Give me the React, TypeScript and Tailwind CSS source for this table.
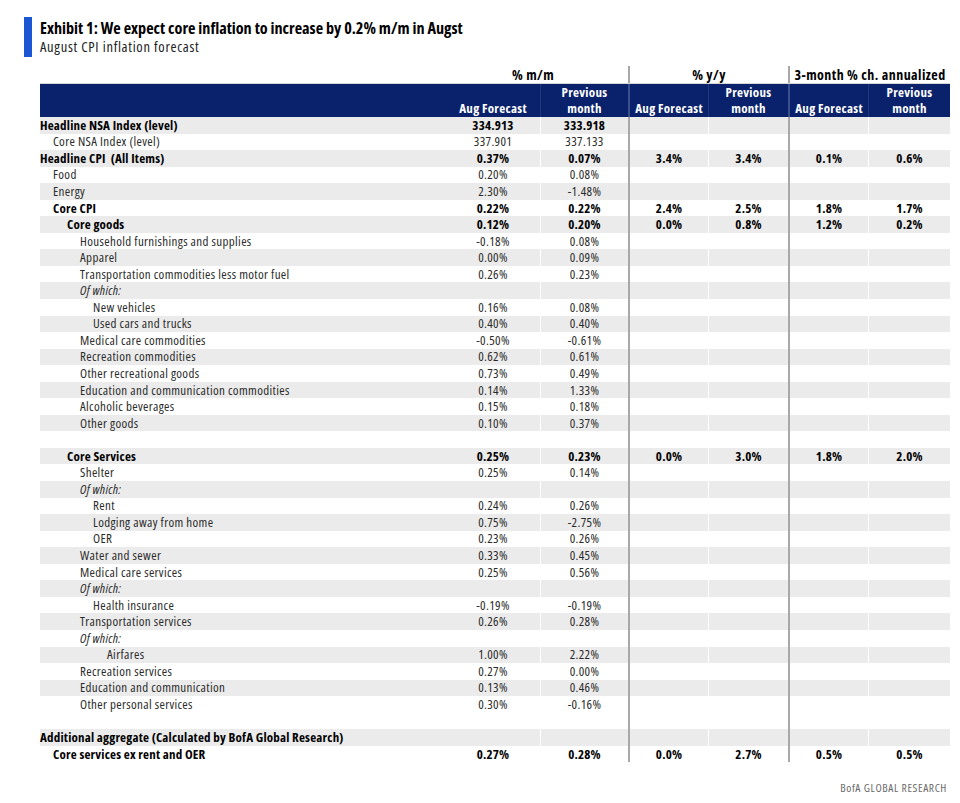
import React from "react";

type Row = {
  label: string;
  indent: number;
  bold?: boolean;
  italic?: boolean;
  vals: string[];
  gray: boolean;
};

const R = (
  label: string,
  indent: number,
  vals: string[],
  gray: boolean,
  opts: { bold?: boolean; italic?: boolean } = {}
): Row => ({ label, indent, vals, gray, ...opts });

const rows: Row[] = [
  R("Headline NSA Index (level)", 0, ["334.913", "333.918"], true, { bold: true }),
  R("Core NSA Index (level)", 1, ["337.901", "337.133"], false),
  R("Headline CPI\u00a0 (All Items)", 0, ["0.37%", "0.07%", "3.4%", "3.4%", "0.1%", "0.6%"], true, { bold: true }),
  R("Food", 1, ["0.20%", "0.08%"], false),
  R("Energy", 1, ["2.30%", "-1.48%"], true),
  R("Core CPI", 1, ["0.22%", "0.22%", "2.4%", "2.5%", "1.8%", "1.7%"], false, { bold: true }),
  R("Core goods", 2, ["0.12%", "0.20%", "0.0%", "0.8%", "1.2%", "0.2%"], true, { bold: true }),
  R("Household furnishings and supplies", 3, ["-0.18%", "0.08%"], false),
  R("Apparel", 3, ["0.00%", "0.09%"], true),
  R("Transportation commodities less motor fuel", 3, ["0.26%", "0.23%"], false),
  R("Of which:", 3, [], true, { italic: true }),
  R("New vehicles", 4, ["0.16%", "0.08%"], false),
  R("Used cars and trucks", 4, ["0.40%", "0.40%"], true),
  R("Medical care commodities", 3, ["-0.50%", "-0.61%"], false),
  R("Recreation commodities", 3, ["0.62%", "0.61%"], true),
  R("Other recreational goods", 3, ["0.73%", "0.49%"], false),
  R("Education and communication commodities", 3, ["0.14%", "1.33%"], true),
  R("Alcoholic beverages", 3, ["0.15%", "0.18%"], false),
  R("Other goods", 3, ["0.10%", "0.37%"], true),
  R("", 0, [], false),
  R("Core Services", 2, ["0.25%", "0.23%", "0.0%", "3.0%", "1.8%", "2.0%"], true, { bold: true }),
  R("Shelter", 3, ["0.25%", "0.14%"], false),
  R("Of which:", 3, [], true, { italic: true }),
  R("Rent", 4, ["0.24%", "0.26%"], false),
  R("Lodging away from home", 4, ["0.75%", "-2.75%"], true),
  R("OER", 4, ["0.23%", "0.26%"], false),
  R("Water and sewer", 3, ["0.33%", "0.45%"], true),
  R("Medical care services", 3, ["0.25%", "0.56%"], false),
  R("Of which:", 3, [], true, { italic: true }),
  R("Health insurance", 4, ["-0.19%", "-0.19%"], false),
  R("Transportation services", 3, ["0.26%", "0.28%"], true),
  R("Of which:", 3, [], false, { italic: true }),
  R("Airfares", 5, ["1.00%", "2.22%"], true),
  R("Recreation services", 3, ["0.27%", "0.00%"], false),
  R("Education and communication", 3, ["0.13%", "0.46%"], true),
  R("Other personal services", 3, ["0.30%", "-0.16%"], false),
  R("", 0, [], false),
  R("Additional aggregate (Calculated by BofA Global Research)", 0, [], true, { bold: true }),
  R("Core services ex rent and OER", 1, ["0.27%", "0.28%", "0.0%", "2.7%", "0.5%", "0.5%"], false, { bold: true }),
];

const indentCls = ["pl-0", "pl-[13px]", "pl-[27px]", "pl-[40px]", "pl-[53px]", "pl-[67px]"];

const GRID = "grid w-[910px] grid-cols-[406px_94px_88px_80px_80px_80px_82px]";

const bodyDiv = [
  "",
  "border-l border-white",
  "border-l-2 border-[#a8a8a8]",
  "border-l border-white",
  "border-l-2 border-[#a8a8a8]",
  "border-l border-white",
];

const headDiv = [
  "",
  "border-l border-white/10",
  "border-l-2 border-[#3b4f8c]",
  "border-l border-white/10",
  "border-l-2 border-[#3b4f8c]",
  "border-l border-white/10",
];

function TableRow({ r }: { r: Row }) {
  const bg = r.gray ? "bg-[#ebebeb]" : "bg-white";
  const weight = r.bold
    ? "font-bold text-black text-[13px] tracking-[0.2px]"
    : "font-normal text-[#2b2b2b] text-[13px] tracking-[0.35px]";
  return (
    <div className={`${GRID} h-[16.55px] ${bg} ${weight}`}>
      <div className={`flex items-center whitespace-nowrap ${indentCls[r.indent]} ${r.italic ? "italic" : ""}`}>
        {r.label}
      </div>
      {[0, 1, 2, 3, 4, 5].map((i) => (
        <div key={i} className={`flex items-center justify-center ${bodyDiv[i]}`}>
          {r.vals[i] ?? ""}
        </div>
      ))}
    </div>
  );
}

export default function App() {
  return (
    <div className="w-[960px] h-[803px] bg-white font-['Open_Sans',sans-serif] [font-stretch:75%] relative">
      {/* Title */}
      <div className="flex pt-[17px] pl-[24px] gap-[8px]">
        <div className="w-[8px] h-[40px] bg-[#1c57d3]" />
        <div className="flex flex-col mt-[2px]">
          <div className="text-[16.2px] leading-[19px] font-bold text-black">
            Exhibit 1: We expect core inflation to increase by 0.2% m/m in Augst
          </div>
          <div className="text-[14.5px] leading-[17px] tracking-[0.7px] text-[#222]">
            August CPI inflation forecast
          </div>
        </div>
      </div>

      {/* Table */}
      <div className="pl-[40px] mt-[9px] leading-none">
        {/* group header row */}
        <div className={`${GRID} h-[17px] font-bold text-black text-[14px] tracking-[0.45px]`}>
          <div />
          <div className="col-span-2 flex items-center justify-center pr-[8px]">% m/m</div>
          <div className="col-span-2 flex items-center justify-center border-l-2 border-[#a8a8a8]">% y/y</div>
          <div className="col-span-2 flex items-center justify-center border-l-2 border-[#a8a8a8] whitespace-nowrap">
            3-month % ch. annualized
          </div>
        </div>
        {/* navy header */}
        <div
          className={`${GRID} h-[34px] bg-[#0a216b] text-white font-bold text-[13px] tracking-[0.3px] leading-[16px] border-t border-[#d6d6d6]`}
        >
          <div />
          {["Aug Forecast", "Previous\nmonth", "Aug Forecast", "Previous\nmonth", "Aug Forecast", "Previous\nmonth"].map(
            (t, i) => (
              <div
                key={i}
                className={`flex flex-col items-center justify-end pb-[1.5px] text-center ${headDiv[i]}`}
              >
                {t.split("\n").map((l, j) => (
                  <span key={j} className="block h-[16px]">{l}</span>
                ))}
              </div>
            )
          )}
        </div>
        {rows.map((r, i) => (
          <TableRow key={i} r={r} />
        ))}
      </div>

      {/* Footer */}
      <div className="flex justify-end pr-[13px] mt-[20px]">
        <span className="text-[11.5px] leading-none tracking-[0.6px] text-[#6b6b6b]">BofA GLOBAL RESEARCH</span>
      </div>
    </div>
  );
}
